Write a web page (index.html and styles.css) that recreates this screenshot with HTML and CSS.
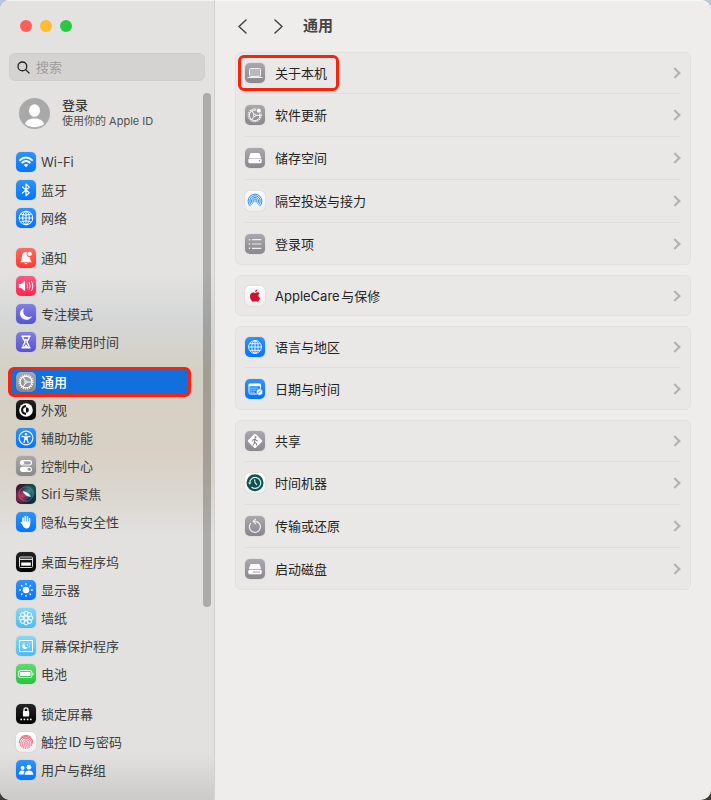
FILE: index.html
```
<!DOCTYPE html>
<html lang="zh-CN">
<head>
  <meta charset="UTF-8" />
  <meta name="viewport" content="width=device-width, initial-scale=1.0" />
  <title>通用</title>
  <link rel="stylesheet" href="styles.css">
</head>
<body>
  <div class="window">
    <aside class="sidebar">
      <div class="lights">
        <button class="light close" aria-label="关闭"></button>
        <button class="light minimize" aria-label="最小化"></button>
        <button class="light expand" aria-label="缩放"></button>
      </div>

      <label class="search">
        <svg viewBox="0 0 14 14" fill="none" stroke="#222" stroke-width="1.4" stroke-linecap="round"><circle cx="5.8" cy="5.8" r="4.7"/><path d="M9.3 9.3L13 13"/></svg>
        <input type="search" placeholder="搜索" aria-label="搜索">
      </label>

      <a class="profile" href="#">
        <svg class="avatar" viewBox="0 0 31 31"><circle cx="15.5" cy="15.5" r="15.5" fill="#a9a9a9"/><ellipse cx="15.5" cy="12.5" rx="5.5" ry="6.3" fill="#fff"/><path d="M6 26C8 18.8 23 18.8 25 26C20 30.2 11 30.2 6 26Z" fill="#fff"/></svg>
        <span class="profile-text">
          <strong>登录</strong>
          <small>使用你的 Apple ID</small>
        </span>
      </a>

      <nav>
        <ul>
          <li><a href="#">
            <svg class="icon blue" viewBox="0 0 20 20" fill="none" stroke="#fff" stroke-width="1.9"><path d="M3.3 8.6Q10 2.5 16.7 8.6M5.7 11Q10 7.2 14.3 11"/><path d="M7.7 12.8Q10 11 12.3 12.8L10 15.2Z" fill="#fff" stroke="none"/></svg>
            Wi-Fi</a></li>
          <li><a href="#">
            <svg class="icon blue" viewBox="0 0 20 20" fill="none" stroke="#fff" stroke-width="1.2" stroke-linejoin="round" stroke-linecap="round"><path d="M6.5 7L13.3 12.8L10 15.9V4L13.3 7.1L6.5 13"/></svg>
            蓝牙</a></li>
          <li><a href="#">
            <svg class="icon blue" viewBox="0 0 20 20" fill="none" stroke="#fff"><circle cx="10" cy="10" r="6.8"/><ellipse cx="10" cy="10" rx="3.3" ry="6.8"/><path d="M3.2 10H16.8M10 3.2V16.8M4.7 6Q10 8.5 15.3 6M4.7 14Q10 11.5 15.3 14"/></svg>
            网络</a></li>
        </ul>
        <ul>
          <li><a href="#">
            <svg class="icon red" viewBox="0 0 20 20" fill="#fff"><path d="M4 14.2C6 12.5 5.5 11 6 8C6.3 5 8.5 3.6 11 4.1C9.6 7 11.5 9.4 14.1 9.2C14.2 11.5 14.5 12.8 16 14.2ZM8.3 15H11.7Q10 17.7 8.3 15Z"/><circle cx="13.6" cy="5.9" r="2.2"/></svg>
            通知</a></li>
          <li><a href="#">
            <svg class="icon pink" viewBox="0 0 20 20" fill="none" stroke="#fff" stroke-linecap="round"><path d="M2.8 7.9H5.2L9 4.8V15.2L5.2 12.1H2.8Z" fill="#fff" stroke="none"/><path d="M11.2 8Q12.4 10 11.2 12M13.3 6.6Q15.4 10 13.3 13.4M15.4 5.2Q18.4 10 15.4 14.8"/></svg>
            声音</a></li>
          <li><a href="#">
            <svg class="icon indigo" viewBox="0 0 20 20" fill="#fff"><path d="M8 3.9C4.5 5.3 3 9.2 4.9 12.6C7.2 16.9 13.4 17 16 12.5C9.5 14.5 5.6 9.6 8 3.9Z"/></svg>
            专注模式</a></li>
          <li><a href="#">
            <svg class="icon indigo" viewBox="0 0 20 20" fill="none" stroke="#fff" stroke-width="1.4"><path d="M5.5 4.2H14.5M5.5 15.8H14.5M6.8 4.5C6.8 8 9 8.3 9 10S6.8 12 6.8 15.5M13.2 4.5C13.2 8 11 8.3 11 10S13.2 12 13.2 15.5"/><path d="M7.5 15.3L10 12.2L12.5 15.3ZM8 7H12L10 9.5Z" fill="#fff" stroke="none"/></svg>
            屏幕使用时间</a></li>
        </ul>
        <ul>
          <li><a class="selected marked" href="#" aria-current="page">
            <svg class="icon gray" viewBox="0 0 20 20" fill="none" stroke="#fff"><circle cx="10" cy="10" r="6.9" stroke-width="1.3" stroke-dasharray="1.1 1.07"/><circle cx="10" cy="10" r="5.9" stroke-width="1.1"/><path d="M9.3 8.9L7.2 5.1M11.3 10H15.8M9.3 11.1L7.2 14.9"/><circle cx="10" cy="10" r="1.2"/></svg>
            通用</a></li>
          <li><a href="#">
            <svg class="icon black" viewBox="0 0 20 20"><circle cx="10" cy="10" r="6.8" fill="#fff"/><path d="M10 5A5 5 0 0 0 10 15Z" fill="#111"/><path d="M10 7.2A2.8 2.8 0 0 0 10 12.8Z" fill="#fff"/><path d="M10 7.2A2.8 2.8 0 0 1 10 12.8Z" fill="#111"/></svg>
            外观</a></li>
          <li><a href="#">
            <svg class="icon blue" viewBox="0 0 20 20" fill="none" stroke="#fff"><circle cx="10" cy="10" r="6.9" stroke-width="1.1"/><circle cx="10" cy="6.3" r="1.2" fill="#fff" stroke="none"/><path d="M6 8.4L9 9V11.2L7.9 14.8M14 8.4L11 9V11.2L12.1 14.8" stroke-width="1.2" stroke-linecap="round"/><path d="M8.7 8.6H11.3V12H8.7Z" fill="#fff" stroke="none"/></svg>
            辅助功能</a></li>
          <li><a href="#">
            <svg class="icon gray" viewBox="0 0 20 20" fill="none" stroke="#fff" stroke-width="1.1"><rect x="4.5" y="4.6" width="11" height="4.4" rx="2.2"/><circle cx="6.7" cy="6.8" r="1.7" fill="#fff" stroke="none"/><rect x="4" y="10.7" width="12" height="5.2" rx="2.6" fill="#fff" stroke="none"/><circle cx="13.3" cy="13.3" r="1.6" fill="#929297" stroke="none"/></svg>
            控制中心</a></li>
          <li><a href="#">
            <svg class="icon siri" viewBox="0 0 20 20" fill="none"><circle cx="10" cy="10" r="7.2" stroke="#a9a0b4" stroke-opacity=".6" stroke-width=".7"/><path d="M6.6 7.6C9 6.4 14.6 10 15 12.8C12.6 13.6 9 12.2 6.6 7.6Z" fill="#8fc4ee"/><path d="M7 7.6C9.4 7.6 13 10 13.6 12C11 12 8.6 10.6 7 7.6Z" fill="#fff"/></svg>
            Siri与聚焦</a></li>
          <li><a href="#">
            <svg class="icon blue" viewBox="0 0 20 20" fill="none" stroke="#fff" stroke-width="1.5" stroke-linecap="round"><path d="M7 11V6.1M9.2 10V4.4M11.4 10V4.8M13.5 11V6.6M7.6 12.5L5.3 10.5"/><path d="M6.3 9.5H14.2V11.5C14.2 18 8.2 17.5 6.7 13.5Z" fill="#fff" stroke="none"/></svg>
            隐私与安全性</a></li>
        </ul>
        <ul>
          <li><a href="#">
            <svg class="icon black" viewBox="0 0 20 20" fill="none" stroke="#ddd"><rect x="3.5" y="5" width="13" height="10.5" rx="1"/><path d="M3.5 7.3H16.5" stroke-width="1.2"/><rect x="5.2" y="10.5" width="9.6" height="3.2" fill="#fff" stroke="none"/></svg>
            桌面与程序坞</a></li>
          <li><a href="#">
            <svg class="icon blue" viewBox="0 0 20 20" fill="none" stroke="#fff" stroke-width="1.3" stroke-linecap="round"><circle cx="10" cy="10" r="3.3" fill="#fff" stroke="none"/><path d="M10 4.5V3.7M10 15.5V16.3M4.5 10H3.7M15.5 10H16.3M6.1 6.1L5.5 5.5M13.9 6.1L14.5 5.5M6.1 13.9L5.5 14.5M13.9 13.9L14.5 14.5"/></svg>
            显示器</a></li>
          <li><a href="#">
            <svg class="icon cyan" viewBox="0 0 20 20" fill="none" stroke="#fff"><circle cx="10" cy="10" r="2"/><circle cx="10" cy="5.2" r="2.1"/><circle cx="13.4" cy="6.6" r="2.1"/><circle cx="14.8" cy="10" r="2.1"/><circle cx="13.4" cy="13.4" r="2.1"/><circle cx="10" cy="14.8" r="2.1"/><circle cx="6.6" cy="13.4" r="2.1"/><circle cx="5.2" cy="10" r="2.1"/><circle cx="6.6" cy="6.6" r="2.1"/></svg>
            墙纸</a></li>
          <li><a href="#">
            <svg class="icon cyan" viewBox="0 0 20 20" fill="#fff"><rect x="3.5" y="4.5" width="13" height="11" fill="none" stroke="#fff"/><path d="M8.5 7C5.6 8 5.4 12.8 8.8 13C10.3 13.1 11.2 12.3 11.6 11.3C9.2 11.5 7.9 9.6 8.5 7Z"/><circle cx="11.5" cy="8.9" r=".7"/><circle cx="13.6" cy="8" r=".6"/><circle cx="13.4" cy="10.7" r=".6"/></svg>
            屏幕保护程序</a></li>
          <li><a href="#">
            <svg class="icon green" viewBox="0 0 20 20" fill="#fff"><rect x="2.5" y="6.5" width="13.5" height="7" rx="2" fill="none" stroke="#fff"/><rect x="3.9" y="7.9" width="10.7" height="4.2" rx="1"/><path d="M17 8.6Q18.6 10 17 11.4Z"/></svg>
            电池</a></li>
        </ul>
        <ul>
          <li><a href="#">
            <svg class="icon black" viewBox="0 0 20 20" fill="#fff"><rect x="6.9" y="7" width="6.3" height="5.5" rx=".8"/><path d="M8 7V5.8A2 2 0 0 1 12 5.8V7" fill="none" stroke="#fff" stroke-width="1.3"/><circle cx="5.2" cy="15.4" r=".9"/><circle cx="8.4" cy="15.4" r=".9"/><circle cx="11.6" cy="15.4" r=".9"/><circle cx="14.8" cy="15.4" r=".9"/></svg>
            锁定屏幕</a></li>
          <li><a href="#">
            <svg class="icon white" viewBox="0 0 20 20" fill="none" stroke="#ee6078" stroke-width=".9" stroke-linecap="round"><path d="M5 5.2Q10 1.2 15 5.2M3.5 8Q10 .8 16.5 8M3.2 11Q3.3 4.8 10 4.8T16.7 11M4.4 13.7C5.4 10 4.5 6.4 10 6.3S15.8 11 15.6 13.5M5.8 15.2C7.5 11 5.8 8 10 7.9S14 12 13.7 15.3M7.4 16.2C9 12.5 7.7 9.6 10 9.5S12.3 13 11.8 16.5M9.4 16.7C10.3 14.5 10.2 13 10.1 11"/></svg>
            触控ID与密码</a></li>
          <li><a href="#">
            <svg class="icon blue" viewBox="0 0 20 20" fill="#fff"><circle cx="6.6" cy="7.9" r="2"/><circle cx="12.9" cy="7.2" r="2.4"/><path d="M2.6 14.5C2.7 10 7 9.8 8.7 11.6Q7.6 12.8 7.6 14.5ZM8.5 14.7C8.6 9 17.3 9 17.5 14.7Z"/></svg>
            用户与群组</a></li>
        </ul>
      </nav>
      <div class="scrollbar"></div>
    </aside>

    <main>
      <header>
        <button class="arrow" aria-label="后退"><svg viewBox="0 0 9 15"><path d="M8 1L1 7.5L8 14"/></svg></button>
        <button class="arrow" aria-label="前进"><svg viewBox="0 0 9 15"><path d="M1 1L8 7.5L1 14"/></svg></button>
        <h1>通用</h1>
      </header>

      <ul class="card">
        <li><a href="#"><span class="entry marked">
          <svg class="icon gray" viewBox="0 0 20 20" fill="none" stroke="#eee"><rect x="4.5" y="5.5" width="11" height="8" rx="1" fill="#b9b9bc"/><path d="M2.5 14.5H17.5" stroke-width="1.2"/></svg>
          关于本机</span></a></li>
        <li><a href="#"><span class="entry">
          <svg class="icon gray" viewBox="0 0 20 20" fill="none" stroke="#fff"><circle cx="9.7" cy="10.3" r="6.4" stroke-width="1.3" stroke-dasharray="1.1 .91"/><circle cx="9.7" cy="10.3" r="5.3"/><path d="M8.9 9.3L7 5.9M11 10.3H15M8.9 11.3L7 14.7"/><circle cx="9.7" cy="10.3" r="1.2"/><circle cx="13.8" cy="5.7" r="2.9" fill="#99999d" stroke="none"/><circle cx="13.8" cy="5.7" r="2.1" fill="#fff" stroke="none"/></svg>
          软件更新</span></a></li>
        <li><a href="#"><span class="entry">
          <svg class="icon gray" viewBox="0 0 20 20" fill="#fff"><path d="M6.3 5H13.7Q14.4 5 14.7 5.8L16.2 10H3.8L5.3 5.8Q5.6 5 6.3 5Z"/><rect x="3.3" y="10.4" width="13.4" height="4.8" rx="1.5"/><circle cx="14.5" cy="12.8" r=".7" fill="#88888d"/></svg>
          储存空间</span></a></li>
        <li><a href="#"><span class="entry">
          <svg class="icon white" viewBox="0 0 20 20" fill="none" stroke="#2889ed"><path d="M5.4 15.2A6.9 6.9 0 1 1 14.6 15.2M6.5 13.8A5.2 5.2 0 1 1 13.5 13.8M7.5 12.6A3.6 3.6 0 1 1 12.5 12.6M8.6 11.4A2 2 0 1 1 11.4 11.4"/><circle cx="10" cy="10" r=".8" fill="#2889ed" stroke="none"/></svg>
          隔空投送与接力</span></a></li>
        <li><a href="#"><span class="entry">
          <svg class="icon gray" viewBox="0 0 20 20" fill="none" stroke="#eee" stroke-width="1.2"><path d="M7 5.7H16.3M7 10H16.3M7 14.3H16.3"/><path d="M3.8 5.7H5.2M3.8 10H5.2M3.8 14.3H5.2" stroke-width="1.6"/></svg>
          登录项</span></a></li>
      </ul>

      <ul class="card">
        <li><a href="#"><span class="entry">
          <svg class="icon white" viewBox="0 0 20 20" fill="#d5102b"><path d="M14.7 7.3C12.8 8.4 13 11 15.2 12C14.3 14.6 13 16.1 11.7 15.6Q10.3 14.9 8.9 15.6C7 16.3 4.5 12.1 5.1 9.2C5.6 6.5 7.9 5.9 10 6.9C11.7 6.1 13.5 6 14.7 7.3ZM9.9 6Q10 3.9 12.4 3.2Q12.4 5.6 9.9 6Z"/></svg>
          AppleCare与保修</span></a></li>
      </ul>

      <ul class="card">
        <li><a href="#"><span class="entry">
          <svg class="icon blue" viewBox="0 0 20 20" fill="none" stroke="#fff" stroke-width=".9"><circle cx="10" cy="10" r="6.4"/><ellipse cx="10" cy="10" rx="3.2" ry="6.4"/><path d="M3.6 10H16.4M10 3.6V16.4M4.7 6.7H15.3M4.7 13.3H15.3"/></svg>
          语言与地区</span></a></li>
        <li><a href="#"><span class="entry">
          <svg class="icon blue" viewBox="0 0 20 20" fill="none" stroke="#fff"><rect x="4" y="5" width="11.5" height="10" rx="1.3"/><path d="M3.7 6H15.8" stroke-width="2.5"/><path d="M5.5 9.2H13.5M5.5 11.2H11M5.5 13.2H10" stroke-dasharray="1.2 .8" stroke-width=".9"/><circle cx="14.5" cy="13" r="3.2" fill="#fff" stroke="#187fff" stroke-width=".6"/><path d="M15.7 11.5L14.5 13.2H13" stroke="#187fff" stroke-width=".8"/></svg>
          日期与时间</span></a></li>
      </ul>

      <ul class="card">
        <li><a href="#"><span class="entry">
          <svg class="icon gray" viewBox="0 0 20 20"><path d="M9.1 3.3Q10 2.5 10.9 3.3L16.7 9.1Q17.5 10 16.7 10.9L10.9 16.7Q10 17.5 9.1 16.7L3.3 10.9Q2.5 10 3.3 9.1Z" fill="#fff"/><circle cx="10.5" cy="6.2" r="1" fill="#88888c"/><path d="M10 8L9.5 11L11.3 12.5L11.8 14.5M9.6 11L8.9 13L7.7 14.5M7.5 10.4L8 8.8L10.2 7.9L11.1 9.3L12.6 10" fill="none" stroke="#88888c" stroke-width="1.1"/></svg>
          共享</span></a></li>
        <li><a href="#"><span class="entry">
          <svg class="icon white" viewBox="0 0 20 20" fill="none" stroke="#c4eeea"><circle cx="10" cy="9.7" r="8.5" fill="#124e4c" stroke="none"/><path d="M4.7 9.7A5.5 5.5 0 1 1 6.5 13.9" stroke-width="1.3"/><path d="M3 9.5H6.5L4.7 11.7Z" fill="#c4eeea" stroke="none"/><path d="M9.5 6.4L10.2 10L12 12.2" stroke-width="1.2"/></svg>
          时间机器</span></a></li>
        <li><a href="#"><span class="entry">
          <svg class="icon gray" viewBox="0 0 20 20" fill="none" stroke="#eee" stroke-width="1.2" stroke-linecap="round"><path d="M5.5 7.5A5.5 5.5 0 1 0 10 5.3H8.2M10.5 3.3L8.2 5.3L10.5 7.6"/></svg>
          传输或还原</span></a></li>
        <li><a href="#"><span class="entry">
          <svg class="icon gray" viewBox="0 0 20 20" fill="#fff"><path d="M6.3 5H13.7Q14.4 5 14.7 5.8L16.2 10H3.8L5.3 5.8Q5.6 5 6.3 5Z"/><rect x="3.3" y="10.7" width="13.4" height="4.5" rx="1.5"/><path d="M7.5 13H15" stroke="#a0a0a4"/></svg>
          启动磁盘</span></a></li>
      </ul>
    </main>
  </div>
</body>
</html>
```
FILE: styles.css
```
* {
  box-sizing: border-box;
}
body {
  margin: 0;
  background: linear-gradient(#b9c7d6, #3c3e35);
  font-family: Inter, "Noto Sans CJK SC", sans-serif;
  font-size: 13px;
  line-height: 20px;
  text-autospace: normal;
}
ul {
  list-style: none;
  margin: 0;
  padding: 0;
}
a {
  color: inherit;
  text-decoration: none;
}
button {
  border: 0;
  padding: 0;
  background: none;
}
.window {
  display: flex;
  min-height: 100vh;
  border-radius: 10px;
  overflow: hidden;
  background: #eeedeb;
  box-shadow: inset 0 1px #f7f7f6;
}

/* sidebar */
.sidebar {
  position: relative;
  flex: 0 0 215px;
  min-width: 0;
  padding: 20px 9px 16px;
  color: #3d3d3c;
  border-right: 1px solid #d2d1cf;
  background: linear-gradient(transparent 94%, rgba(0, 0, 0, 0.1)),
    linear-gradient(#e3e2e0 34%, #d5d7d6 40%, #d4d0c5 46%, #d8d0c5 56%, #dad5cd 61%, #e2e1df 67%);
  box-shadow: inset 0 1px #f3f3f2;
}
.lights {
  display: flex;
  gap: 8px;
  padding-left: 11px;
}
.light {
  width: 12px;
  height: 12px;
  border-radius: 50%;
}
.close {
  background: #ff5f57;
}
.minimize {
  background: #febc2e;
}
.expand {
  background: #28c840;
}
.search {
  display: flex;
  align-items: center;
  gap: 6px;
  height: 28px;
  margin-top: 21px;
  padding: 0 7px;
  border: 1px solid #cfcecc;
  border-radius: 6px;
  background: #d4d3d1;
}
.search svg {
  flex: none;
  width: 13px;
  height: 13px;
}
.search input {
  flex: 1;
  min-width: 0;
  padding: 0;
  border: 0;
  outline: 0;
  background: none;
  font: inherit;
}
.search input::placeholder {
  color: #9f9e9c;
}
.profile {
  display: flex;
  align-items: center;
  gap: 12px;
  height: 36px;
  margin: 14px 0 17px;
  padding-left: 10px;
}
.avatar {
  width: 31px;
  height: 31px;
}
.profile-text {
  display: flex;
  flex-direction: column;
}
.profile strong {
  font-weight: 500;
  line-height: 16px;
}
.profile small {
  font-size: 11px;
  line-height: 16px;
  color: #50504f;
}
nav {
  display: flex;
  flex-direction: column;
  gap: 12px;
  margin-right: 15px;
}
nav a {
  display: flex;
  align-items: center;
  gap: 5px;
  height: 28px;
  padding-left: 7px;
  border-radius: 5px;
}
nav .selected {
  background: #126fdb;
  color: #fff;
  font-weight: 500;
}
.scrollbar {
  position: absolute;
  top: 93px;
  right: 3px;
  width: 8px;
  height: 514px;
  border-radius: 4px;
  background: rgba(0, 0, 0, 0.24);
}

/* red boxes around the steps to follow */
.marked {
  position: relative;
}
.marked::after {
  content: "";
  position: absolute;
  inset: -1px;
  border: 3px solid #fb220b;
  border-radius: 6px;
}
.entry.marked::after {
  inset: -8px -12px -8px -7px;
}

/* icon tiles */
.icon {
  flex: none;
  width: 20px;
  height: 20px;
  border-radius: 5px;
  box-shadow: 0 0 1px rgba(0, 0, 0, 0.3);
}
.blue {
  background: linear-gradient(#2e93ff, #0474fb);
}
.red {
  background: linear-gradient(#ff6c60, #fc382e);
}
.pink {
  background: linear-gradient(#ff5a80, #fd2453);
}
.indigo {
  background: linear-gradient(#817ee4, #5753ce);
}
.gray {
  background: linear-gradient(#a9a9ad, #88888d);
}
.black {
  background: linear-gradient(#242424, #000);
}
.cyan {
  background: linear-gradient(#83d9f8, #52b9ed);
}
.green {
  background: linear-gradient(#5cdd6c, #24c53b);
}
.white {
  background: linear-gradient(#fff, #eee);
}
.siri {
  background: radial-gradient(circle at 30% 60%, #d0386f, transparent 45%),
    radial-gradient(circle at 65% 35%, #24958a, transparent 45%),
    linear-gradient(100deg, #4d1636, #172331 50%, #0a3a3c);
}

/* content */
main {
  flex: 1;
  min-width: 0;
  display: flex;
  flex-direction: column;
  gap: 10px;
  padding: 0 20px 20px;
  color: #242423;
}
header {
  display: flex;
  align-items: center;
  height: 42px;
  padding: 10px 0 0 3px;
}
.arrow {
  width: 9px;
  height: 15px;
  margin-right: 27px;
}
.arrow + h1 {
  margin-left: -7px;
}
.arrow svg {
  display: block;
}
.arrow path {
  fill: none;
  stroke: #454544;
  stroke-width: 1.5;
  stroke-linecap: round;
  stroke-linejoin: round;
}
h1 {
  margin: 0;
  font-size: 15px;
  font-weight: 700;
  color: #454544;
}
.card {
  padding: 0 9px;
  border: 1px solid #e2e1df;
  border-radius: 6px;
  background: #e9e8e6;
}
.card a {
  display: flex;
  align-items: center;
  justify-content: space-between;
  height: 42px;
}
.card li:first-child a {
  height: 40px;
}
.card li:last-child a {
  height: 41px;
}
.card li:only-child a {
  height: 39px;
}
.card li + li {
  border-top: 1px solid #dfdedc;
}
.card a::after {
  content: "";
  width: 6px;
  height: 6px;
  margin-right: 2px;
  border: solid #b2b1b0;
  border-width: 2px 2px 0 0;
  transform: rotate(45deg);
}
.entry {
  display: flex;
  align-items: center;
  gap: 10px;
}
```
